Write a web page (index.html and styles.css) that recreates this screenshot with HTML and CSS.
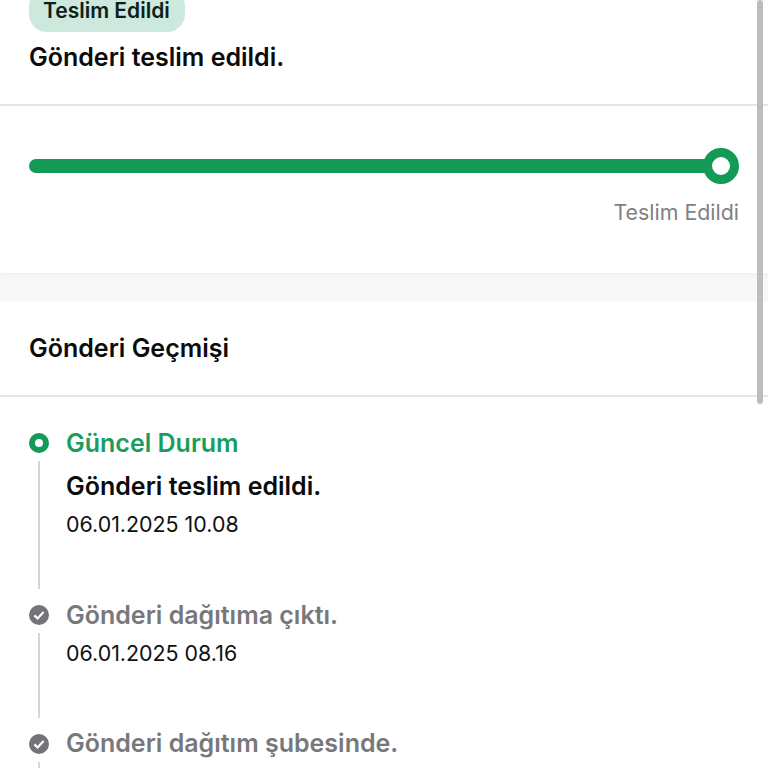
FILE: index.html
```html
<!DOCTYPE html>
<html lang="tr">
<head>
<meta charset="utf-8">
<title>Gönderi Takibi</title>
<link rel="stylesheet" href="styles.css">
</head>
<body>
<div class="page">
  <section class="summary">
    <div class="summary-head">
      <span class="badge">Teslim Edildi</span>
      <p class="summary-text">Gönderi teslim edildi.</p>
    </div>
    <div class="progress-wrap">
      <div class="progress"><span class="progress-knob"></span></div>
      <p class="progress-label">Teslim Edildi</p>
    </div>
  </section>
  <section class="history">
    <h2 class="history-title">Gönderi Geçmişi</h2>
    <ol class="timeline">
      <li class="item item-current">
        <div class="marker"><span class="dot"></span><span class="line"></span></div>
        <div class="body">
          <p class="current-label">Güncel Durum</p>
          <p class="status status-strong">Gönderi teslim edildi.</p>
          <p class="date">06.01.2025 10.08</p>
        </div>
      </li>
      <li class="item item-past">
        <div class="marker">
          <svg class="check" viewBox="0 0 20 20"><circle cx="10" cy="10" r="10" fill="#737478"/><path d="M5.4 10.4l3.2 3.1 6-6.6" fill="none" stroke="#fff" stroke-width="2.2"/></svg>
          <span class="line"></span>
        </div>
        <div class="body">
          <p class="status">Gönderi dağıtıma çıktı.</p>
          <p class="date date-past">06.01.2025 08.16</p>
        </div>
      </li>
      <li class="item item-past">
        <div class="marker">
          <svg class="check" viewBox="0 0 20 20"><circle cx="10" cy="10" r="10" fill="#737478"/><path d="M5.4 10.4l3.2 3.1 6-6.6" fill="none" stroke="#fff" stroke-width="2.2"/></svg>
          <span class="line"></span>
        </div>
        <div class="body">
          <p class="status status-last">Gönderi dağıtım şubesinde.</p>
        </div>
      </li>
    </ol>
  </section>
</div>
<div class="scrollbar"></div>
</body>
</html>
```
FILE: styles.css
```css
* { box-sizing: border-box; }
html, body { margin: 0; height: 768px; overflow: hidden; background: #f8f8f8; }
body { font-family: Inter, "Liberation Sans", sans-serif; color: #0b0b0b; }
p, h2, ol { margin: 0; padding: 0; }
ol { list-style: none; }

.page { margin-top: -12px; }

.summary { background: #fff; box-shadow: 0 1px 6px rgba(0,0,0,.06); }
.summary-head { padding: 0 29px 32px; border-bottom: 2px solid #e6e6e6; height: 118px; }
.badge {
  display: inline-block; height: 44px; padding: 9px 15px 0 14px; border-radius: 18px;
  background: #cde8dc; font-size: 21px; line-height: 28px; font-weight: 600; color: #0d2018;
}
.summary-text { margin-top: 8px; font-size: 25px; line-height: 34px; font-weight: 600; }

.progress-wrap { padding: 50px 29px 0; height: 167px; }
.progress { position: relative; height: 14px; margin-right: 10px; border-radius: 7px; background: #129a56; top: 3px; }
.progress-knob {
  position: absolute; right: -10px; top: -11px; width: 36px; height: 36px;
  border: 9px solid #129a56; border-radius: 50%; background: #fff;
}
.progress-label { margin-top: 28px; text-align: right; font-size: 21.4px; line-height: 28px; color: #808184; }

.history { margin-top: 29px; background: #fff; min-height: 600px; }
.history-title {
  height: 95px; padding: 29px 29px 0; border-bottom: 2px solid #e6e6e6;
  font-size: 25px; line-height: 34px; font-weight: 600;
}
.timeline { padding: 36px 29px 0; }
.item { display: flex; gap: 18px; }
.item-current { height: 172px; }
.item-past { height: 129px; }
.marker { width: 19px; display: flex; flex-direction: column; align-items: center; padding-bottom: 16px; flex: none; }
.dot { width: 20px; height: 20px; flex: none; border: 6px solid #129a56; border-radius: 50%; background: #fff; }
.check { width: 20px; height: 20px; flex: none; }
.line { width: 2px; flex: 1; margin-top: 8px; background: #d5d5d5; }
.body { flex: 1; }
.current-label { font-size: 25px; line-height: 20px; font-weight: 600; color: #1a9d5c; }
.status { font-size: 25px; line-height: 20px; font-weight: 600; color: #77787c; }
.status-strong { margin-top: 23px; color: #0b0b0b; }
.status-last { margin-top: -1px; }
.date { margin-top: 18px; font-size: 21.4px; line-height: 20px; color: #111; }
.date-past { margin-top: 18px; }

.scrollbar { position: absolute; left: 757px; top: 0; width: 6px; height: 404px; border-radius: 3px; background: #bdbdbd; }
```
